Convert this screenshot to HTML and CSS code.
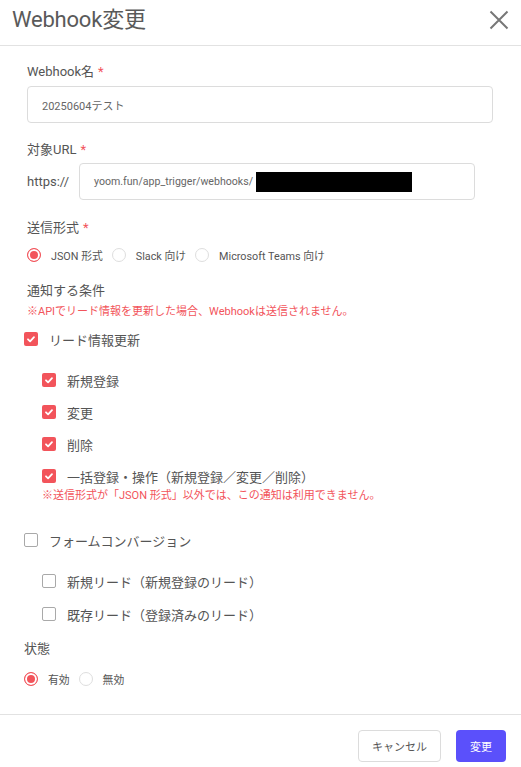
FILE: index.html
```html
<!DOCTYPE html>
<html lang="ja">
<head>
<meta charset="utf-8">
<title>Webhook変更</title>
<link rel="stylesheet" href="styles.css">
</head>
<body>
<div class="modal">
  <div class="header">
    <h1 class="title">Webhook変更</h1>
    <svg class="close" viewBox="0 0 20 20" width="20" height="20"><path d="M1.5 1.5 L18.5 18.5 M18.5 1.5 L1.5 18.5" stroke="#777" stroke-width="2" fill="none"/></svg>
  </div>
  <div class="content">
    <div class="label l1">Webhook名<span class="req">*</span></div>
    <div class="input">20250604テスト</div>

    <div class="label l2">対象URL<span class="req">*</span></div>
    <div class="url-row">
      <span class="scheme">https://</span>
      <div class="input url-input">yoom.fun/app_trigger/webhooks/<span class="redact"></span></div>
    </div>

    <div class="label l3">送信形式<span class="req">*</span></div>
    <div class="radios r1">
      <span class="radio on"></span><span class="rlabel">JSON 形式</span>
      <span class="radio"></span><span class="rlabel">Slack 向け</span>
      <span class="radio"></span><span class="rlabel">Microsoft Teams 向け</span>
    </div>

    <div class="label l4">通知する条件</div>
    <div class="note n1">※APIでリード情報を更新した場合、Webhookは送信されません。</div>

    <div class="cb-row parent p1"><span class="cb on"><svg viewBox="0 0 14 14" width="14" height="14"><path d="M4 7.3 L6.1 9.3 L10 5.2" stroke="#fff" stroke-width="1.8" fill="none" stroke-linecap="round" stroke-linejoin="round"/></svg></span><span class="cblabel">リード情報更新</span></div>
    <div class="sub s1">
      <div class="cb-row"><span class="cb on"><svg viewBox="0 0 14 14" width="14" height="14"><path d="M4 7.3 L6.1 9.3 L10 5.2" stroke="#fff" stroke-width="1.8" fill="none" stroke-linecap="round" stroke-linejoin="round"/></svg></span><span class="cblabel">新規登録</span></div>
      <div class="cb-row"><span class="cb on"><svg viewBox="0 0 14 14" width="14" height="14"><path d="M4 7.3 L6.1 9.3 L10 5.2" stroke="#fff" stroke-width="1.8" fill="none" stroke-linecap="round" stroke-linejoin="round"/></svg></span><span class="cblabel">変更</span></div>
      <div class="cb-row"><span class="cb on"><svg viewBox="0 0 14 14" width="14" height="14"><path d="M4 7.3 L6.1 9.3 L10 5.2" stroke="#fff" stroke-width="1.8" fill="none" stroke-linecap="round" stroke-linejoin="round"/></svg></span><span class="cblabel">削除</span></div>
      <div class="cb-row"><span class="cb on"><svg viewBox="0 0 14 14" width="14" height="14"><path d="M4 7.3 L6.1 9.3 L10 5.2" stroke="#fff" stroke-width="1.8" fill="none" stroke-linecap="round" stroke-linejoin="round"/></svg></span><span class="cblabel">一括登録・操作（新規登録／変更／削除）</span></div>
    </div>
    <div class="note n2">※送信形式が「JSON 形式」以外では、この通知は利用できません。</div>

    <div class="cb-row parent p2"><span class="cb"></span><span class="cblabel">フォームコンバージョン</span></div>
    <div class="sub s2">
      <div class="cb-row"><span class="cb"></span><span class="cblabel">新規リード（新規登録のリード）</span></div>
      <div class="cb-row"><span class="cb"></span><span class="cblabel">既存リード（登録済みのリード）</span></div>
    </div>

    <div class="label l5">状態</div>
    <div class="radios r2">
      <span class="radio on"></span><span class="rlabel">有効</span>
      <span class="radio"></span><span class="rlabel">無効</span>
    </div>
  </div>
  <div class="footer">
    <button class="btn cancel">キャンセル</button>
    <button class="btn primary">変更</button>
  </div>
</div>
</body>
</html>
```
FILE: styles.css
```css
* { box-sizing: border-box; }
body {
  margin: 0;
  background: #fff;
  font-family: Roboto, "Noto Sans CJK JP", sans-serif;
  color: #555;
}
.modal { width: 521px; }
.header {
  height: 46px;
  border-bottom: 1px solid #e2e2e2;
  display: flex;
  align-items: center;
  justify-content: space-between;
  padding: 0 12px 6px 12px;
}
.title {
  margin: 0;
  font-size: 22px;
  line-height: 26px;
  font-weight: 400;
  color: #5a5a5a;
  letter-spacing: -0.2px;
}
.close { display: block; }
.content { padding: 0 28px 0 27px; }
.label {
  font-size: 13px;
  line-height: 20px;
  height: 20px;
  color: #555;
}
.req { color: #f2545b; margin-left: 4px; }
.l1 { margin-top: 16px; }
.l2 { margin-top: 17px; }
.l3 { margin-top: 18px; }
.l4 { margin-top: 16px; }
.l5 { margin-top: 15px; margin-left: -3px; }
.input {
  margin-top: 4px;
  height: 37px;
  border: 1px solid #dcdcdc;
  border-radius: 4px;
  display: flex;
  align-items: center;
  padding-left: 14px;
  font-size: 11px;
  color: #666;
}
.url-row {
  margin-top: 3px;
  display: flex;
  align-items: center;
}
.scheme {
  width: 52px;
  font-size: 13px;
  color: #555;
}
.url-input { margin-top: 0; width: 396px; font-size: 10.6px; }
.redact {
  display: inline-block;
  width: 156px;
  height: 20px;
  background: #000;
  margin-left: 3px;
}
.radios {
  display: flex;
  align-items: center;
  height: 20px;
}
.r1 { margin-top: 7px; }
.r2 { margin-top: 10px; margin-left: -3px; }
.radio {
  width: 14px;
  height: 14px;
  border-radius: 50%;
  border: 1px solid #dedede;
  margin-right: 10px;
  flex: none;
}
.radio.on {
  border-color: #f2545b;
  background: #f2545b;
  box-shadow: inset 0 0 0 2px #fff;
}
.rlabel {
  font-size: 10.8px;
  color: #555;
  margin-right: 9px;
}
.note {
  font-size: 11px;
  line-height: 16px;
  color: #f2545b;
}
.n1 { margin-top: 3px; }
.n2 { margin-top: 2px; padding-left: 15px; }
.cb-row {
  display: flex;
  align-items: center;
  height: 20px;
}
.parent { margin-left: -3px; }
.p1 { margin-top: 9px; }
.p2 { margin-top: 26px; }
.cb {
  width: 14px;
  height: 14px;
  border-radius: 2px;
  border: 1px solid #a9a9a9;
  background: #fff;
  margin-right: 11px;
  flex: none;
  display: flex;
}
.cb.on {
  border: none;
  background: #f2545b;
}
.cblabel { font-size: 13px; color: #555; }
.sub {
  display: flex;
  flex-direction: column;
  padding-left: 15px;
}
.s1 { margin-top: 21px; gap: 12px; }
.s2 { margin-top: 21px; gap: 13px; }
.footer {
  margin-top: 25px;
  border-top: 1px solid #e2e2e2;
  padding: 15px 15px 0 0;
  display: flex;
  justify-content: flex-end;
  gap: 15px;
}
.btn {
  height: 32px;
  border-radius: 4px;
  font-family: Roboto, "Noto Sans CJK JP", sans-serif;
  font-size: 11px;
  cursor: pointer;
}
.cancel {
  width: 83px;
  background: #fff;
  border: 1px solid #dcdcdc;
  color: #555;
}
.primary {
  width: 50px;
  background: #5b50fb;
  border: none;
  color: #fff;
}
```
